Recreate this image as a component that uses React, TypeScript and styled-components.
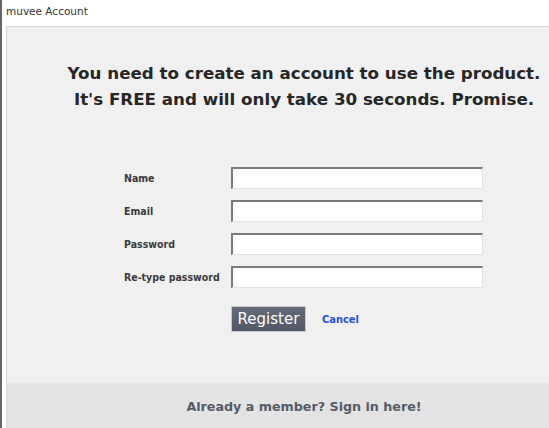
import React from 'react';
import styled, { createGlobalStyle } from 'styled-components';

const GlobalStyle = createGlobalStyle`
html, body {
  margin: 0;
  padding: 0;
  overflow: hidden;
  background: #ffffff;
}
`

const Window = styled.div`
display: flex;
flex-direction: column;
width: 547px;
height: 428px;
border-left: 2px solid #666;
background: #fff;
font-family: Tahoma, "DejaVu Sans", sans-serif;
overflow: hidden;
`
const TitleBar = styled.div`
height: 26px;
padding-left: 4px;
font-size: 10.5px;
line-height: 22px;
color: #333;
`
const Panel = styled.div`
flex: 1;
display: flex;
flex-direction: column;
margin-left: 4px;
width: 594px;
border-top: 1px solid #d6d6d6;
border-left: 1px solid #d6d6d6;
background: #f0f0f0;
`
const Headline = styled.h1`
margin: 0;
padding-top: 33px;
text-align: center;
font-family: "DejaVu Sans", sans-serif;
font-size: 16.7px;
line-height: 26px;
font-weight: bold;
color: #262626;
`
const Form = styled.form`
display: grid;
grid-template-columns: 107px 252px;
row-gap: 11px;
align-items: center;
margin: 55px 0 0 117px;
`
const Label = styled.label`
font-family: "DejaVu Sans", sans-serif;
font-stretch: condensed;
font-size: 10.5px;
font-weight: bold;
color: #3a3a3a;
`
const Input = styled.input`
box-sizing: border-box;
width: 252px;
height: 22px;
margin: 0;
padding: 0 3px;
background: #fff;
border-top: 2px solid #7a7a7a;
border-left: 2px solid #7a7a7a;
border-right: 1px solid #e2e2e2;
border-bottom: 1px solid #e2e2e2;
outline: none;
`
const Actions = styled.div`
grid-column: 2;
display: flex;
align-items: center;
gap: 16px;
margin-top: 7px;
`
const Button = styled.button`
width: 75px;
height: 26px;
padding: 0;
border: 1px solid #c8c8c8;
background: linear-gradient(#646a78, #525866);
color: #fff;
font-family: "DejaVu Sans", sans-serif;
font-size: 15px;
cursor: pointer;
`
const LinkText = styled.a`
font-family: "DejaVu Sans", sans-serif;
font-stretch: condensed;
font-size: 11px;
font-weight: bold;
color: #1f4fe6;
text-decoration: none;
`
const Footer = styled.div`
margin-top: auto;
height: 44px;
border-top: 1px solid #e8e8e8;
background: #e3e3e3;
display: flex;
align-items: center;
justify-content: center;
font-family: "DejaVu Sans", sans-serif;
font-size: 12.7px;
font-weight: bold;
color: #555b66;
`

const fields = ['Name', 'Email', 'Password', 'Re-type password']

function App() {
  return (
    <Window>
      <GlobalStyle />
      <TitleBar>muvee Account</TitleBar>
      <Panel>
        <Headline>
          You need to create an account to use the product.<br />
          It's FREE and will only take 30 seconds. Promise.
        </Headline>
        <Form onSubmit={e => e.preventDefault()}>
          {fields.map(f => <React.Fragment key={f}>
            <Label>{f}</Label>
            <Input type={f.includes('assword') ? 'password' : 'text'} />
          </React.Fragment>)}
          <Actions>
            <Button type='submit'>Register</Button>
            <LinkText href='#'>Cancel</LinkText>
          </Actions>
        </Form>
        <Footer>Already a member? Sign in here!</Footer>
      </Panel>
    </Window>
  );
}

export default App;
